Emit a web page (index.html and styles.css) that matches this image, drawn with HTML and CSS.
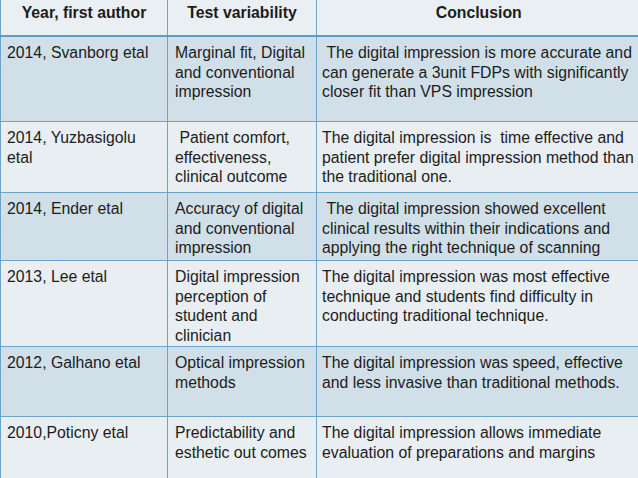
FILE: index.html
```html
<!DOCTYPE html>
<html>
<head>
<meta charset="utf-8">
<link rel="stylesheet" href="styles.css">
</head>
<body>
<table class="grid">
  <colgroup>
    <col class="c1"><col class="c2"><col class="c3">
  </colgroup>
  <thead>
    <tr class="head">
      <th>Year, first author</th>
      <th>Test variability</th>
      <th>Conclusion</th>
    </tr>
  </thead>
  <tbody>
    <tr class="dark r1">
      <td>2014, Svanborg etal</td>
      <td>Marginal fit, Digital<br>and conventional<br>impression</td>
      <td>&nbsp;The digital impression is more accurate and<br>can generate a 3unit FDPs with significantly<br>closer fit than VPS impression</td>
    </tr>
    <tr class="light r2">
      <td>2014, Yuzbasigolu<br>etal</td>
      <td>&nbsp;Patient comfort,<br>effectiveness,<br>clinical outcome</td>
      <td>The digital impression is&nbsp; time effective and<br>patient prefer digital impression method than<br>the traditional one.</td>
    </tr>
    <tr class="dark r3">
      <td>2014, Ender etal</td>
      <td>Accuracy of digital<br>and conventional<br>impression</td>
      <td>&nbsp;The digital impression showed excellent<br>clinical results within their indications and<br>applying the right technique of scanning</td>
    </tr>
    <tr class="light r4">
      <td>2013, Lee etal</td>
      <td>Digital impression<br>perception of<br>student and<br>clinician</td>
      <td>The digital impression was most effective<br>technique and students find difficulty in<br>conducting traditional technique.</td>
    </tr>
    <tr class="dark r5">
      <td>2012, Galhano etal</td>
      <td>Optical impression<br>methods</td>
      <td>The digital impression was speed, effective<br>and less invasive than traditional methods.</td>
    </tr>
    <tr class="light r6">
      <td>2010,Poticny etal</td>
      <td>Predictability and<br>esthetic out comes</td>
      <td>The digital impression allows immediate<br>evaluation of preparations and margins</td>
    </tr>
  </tbody>
</table>
</body>
</html>
```
FILE: styles.css
```css
html, body {
  margin: 0;
  padding: 0;
  background: #e8eef2;
}
body {
  width: 638px;
  height: 478px;
  overflow: hidden;
  font-family: "Liberation Sans", Arial, sans-serif;
  font-size: 15.8px;
  color: #1c1c1c;
}
.grid {
  border-collapse: collapse;
  table-layout: fixed;
  width: 640px;
}
.c1 { width: 167px; }
.c2 { width: 149px; }
.c3 { width: 324px; }
.grid th,
.grid td {
  vertical-align: top;
  white-space: nowrap;
  line-height: 19.7px;
  border-left: 1px solid #6aa6cc;
  border-top: 1px solid #6aa6cc;
  padding: 0;
}
.grid th {
  font-weight: bold;
  text-align: center;
  padding-top: 3px;
  height: 32px;
  border-top: none;
  border-bottom: 2px solid #5f9cc5;
}
.grid td {
  padding: 6px 0 0 6px;
  overflow: visible;
}
.grid td:nth-child(2) { padding-left: 7px; }
.grid td:nth-child(3) { padding-left: 5px; }
.head { background: #e9eff3; }
.dark { background: #d0dfe8; }
.light { background: #e8eef2; }
.r1 td { height: 78px; }
.r2 td { height: 64px; }
.r3 td { height: 61px; }
.r4 td { height: 78px; }
.r5 td { height: 63px; }
.r6 td { height: 64px; }
```
